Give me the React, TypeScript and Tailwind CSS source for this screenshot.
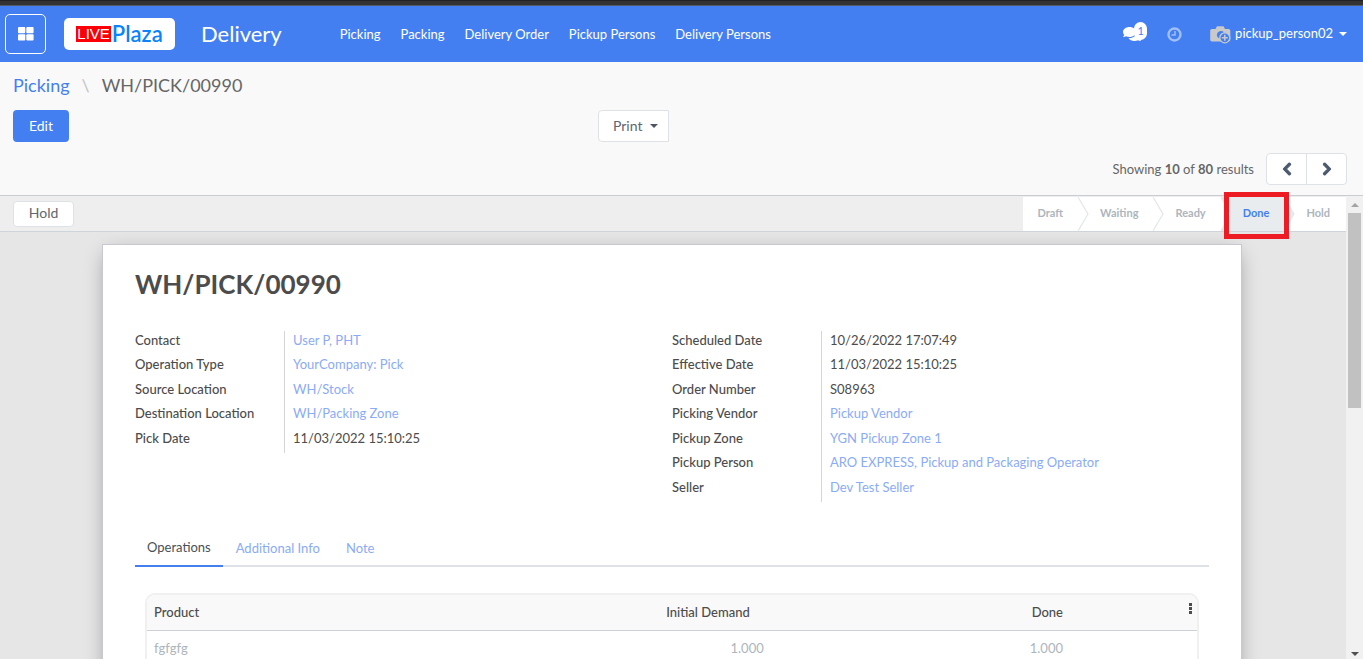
import { FaChevronLeft, FaChevronRight, FaComments } from 'react-icons/fa';

const menus = ['Picking', 'Packing', 'Delivery Order', 'Pickup Persons', 'Delivery Persons'];

const leftFields = [
  { label: 'Contact', value: 'User P, PHT', link: true },
  { label: 'Operation Type', value: 'YourCompany: Pick', link: true },
  { label: 'Source Location', value: 'WH/Stock', link: true },
  { label: 'Destination Location', value: 'WH/Packing Zone', link: true },
  { label: 'Pick Date', value: '11/03/2022 15:10:25' },
];

const rightFields = [
  { label: 'Scheduled Date', value: '10/26/2022 17:07:49' },
  { label: 'Effective Date', value: '11/03/2022 15:10:25' },
  { label: 'Order Number', value: 'S08963' },
  { label: 'Picking Vendor', value: 'Pickup Vendor', link: true },
  { label: 'Pickup Zone', value: 'YGN Pickup Zone 1', link: true },
  { label: 'Pickup Person', value: 'ARO EXPRESS, Pickup and Packaging Operator', link: true },
  { label: 'Seller', value: 'Dev Test Seller', link: true },
];

type Field = { label: string; value: string; link?: boolean };

function FieldGroup({ fields }: { fields: Field[] }) {
  return (
    <dl className="flex-1 self-start">
      {fields.map((f) => (
        <div key={f.label} className="flex odd:h-6 even:h-[25px]">
          <dt className="w-[150px] border-r border-[#d5d5d8] font-medium text-[#4c4c4c]">{f.label}</dt>
          <dd className="pl-2 text-[#4c4c4c]">
            {f.link ? <a href="#" className="text-[#8aabf8]">{f.value}</a> : f.value}
          </dd>
        </div>
      ))}
    </dl>
  );
}

function Chevron({ from, to }: { from: string; to: string }) {
  return (
    <svg className={`h-[34px] w-[11px] ${to}`} viewBox="0 0 11 34" aria-hidden="true">
      <path d="M0 0L10 17L0 34Z" className={from} />
      <path d="M0 0L10 17L0 34" fill="none" stroke="#e3e7ea" strokeWidth="1.2" />
    </svg>
  );
}

function Navbar() {
  return (
    <header className="flex h-14 shrink-0 items-center bg-[#447ff2] pl-[5px] pr-4 text-white">
      <button aria-label="Apps" className="flex h-10 w-[41px] items-center justify-center rounded-[5px] border border-white">
        <svg width="16" height="14" viewBox="0 0 16 14" fill="currentColor">
          <rect width="7.3" height="6.3" rx="1" />
          <rect x="8.3" width="7.3" height="6.3" rx="1" />
          <rect y="7.3" width="7.3" height="6.3" rx="1" />
          <rect x="8.3" y="7.3" width="7.3" height="6.3" rx="1" />
        </svg>
      </button>
      <div className="ml-[18px] flex h-8 w-[111px] items-center justify-center gap-px rounded-[5px] bg-white">
        <span className="flex h-4 items-center bg-[#fb0007] px-px font-['Liberation_Sans'] text-[15px] leading-4">LIVE</span>
        <span className="text-[22px] font-semibold leading-4 text-[#0b84fb]">Plaza</span>
      </div>
      <h1 className="ml-[26px] pb-0.5 text-[22px]">Delivery</h1>
      <nav className="ml-[58px] flex gap-5 pt-px">
        {menus.map((m) => (
          <a key={m} href="#">{m}</a>
        ))}
      </nav>
      <div className="ml-auto flex items-center">
        <button aria-label="Messages" className="relative mr-5 flex h-6 w-6 items-center">
          <FaComments className="h-4 w-[18px]" />
          <span className="absolute right-0 top-0 flex h-[18px] w-[13px] items-center justify-center rounded-full bg-white text-[11px] text-[#447ff2]">1</span>
        </button>
        <button aria-label="Activities">
          <svg width="15" height="15" viewBox="0 0 15 15" fill="none" stroke="#a1bff8">
            <circle cx="7.5" cy="7.5" r="6" strokeWidth="2.4" />
            <path d="M8 4V8H4.5" strokeWidth="1.5" />
          </svg>
        </button>
        <button className="ml-7 flex items-center">
          <svg className="mr-1" width="21" height="19" viewBox="0 0 21 19">
            <path d="M2 4H5.5L7 1.2H13.5L15 4H18.5Q20.3 4 20.3 5.8V14.7Q20.3 16.5 18.5 16.5H2Q0.2 16.5 0.2 14.7V5.8Q0.2 4 2 4Z" fill="#c9c9c9" />
            <path d="M6.8 10A4.2 4.2 0 0 1 14 7.2L11 9L9.2 13.5A4.2 4.2 0 0 1 6.8 10Z" fill="#447ff2" />
            <circle cx="14.8" cy="12.8" r="5" fill="#447ff2" stroke="#c9c9c9" strokeWidth="1.3" />
            <path d="M14.8 9.8V15.8M11.8 12.8H17.8" stroke="#c9c9c9" strokeWidth="1.5" />
          </svg>
          pickup_person02
          <span className="ml-1.5 border-x-4 border-t-4 border-x-transparent border-t-white" />
        </button>
      </div>
    </header>
  );
}

function ControlPanel() {
  return (
    <div className="shrink-0 border-b border-[#c9ccd2] bg-[#f9f9f9] px-[13px] pb-[10px] pt-[11px]">
      <nav className="flex h-6 items-center text-lg text-[#666]">
        <a href="#" className="text-[#447ff2]">Picking</a>
        <span className="mx-3 text-[#c4c4c4]">\</span>
        <span>WH/PICK/00990</span>
      </nav>
      <div className="mt-[13px] flex text-sm">
        <div className="w-7/16">
          <button className="h-8 w-14 rounded bg-[#447ff2] text-white">Edit</button>
        </div>
        <button className="flex h-8 items-center rounded-l border border-[#dee2e6] bg-white pl-[14px] pr-[10px] text-[#5f6670]">
          Print
          <span className="ml-2 border-x-4 border-t-4 border-x-transparent border-t-[#4c5563]" />
        </button>
      </div>
      <div className="mt-[11px] flex items-center justify-end pr-[3px] text-[#666]">
        <span className="pt-px">Showing <b>10</b> of <b>80</b> results</span>
        <div className="ml-3 flex h-8 w-[81px] rounded border border-[#dee2e6] bg-white text-[#4c5a70]">
          <button aria-label="Previous" className="flex flex-1 items-center justify-center border-r border-[#dee2e6]">
            <FaChevronLeft className="h-3.5 w-3.5 stroke-current stroke-[40]" />
          </button>
          <button aria-label="Next" className="flex flex-1 items-center justify-center">
            <FaChevronRight className="h-3.5 w-3.5 stroke-current stroke-[40]" />
          </button>
        </div>
      </div>
    </div>
  );
}

function StatusBar() {
  return (
    <div className="flex h-9 shrink-0 items-center justify-between border-b border-[#ced4da] bg-[#eee] pl-[13px]">
      <button className="h-[26px] w-[61px] rounded border border-[#dee2e6] bg-white pb-0.5 text-sm text-[#5f6670]">Hold</button>
      <div className="flex h-[34px] bg-white text-[11px] font-bold text-[#adb5bd]">
        <button className="pb-px pl-[15px] pr-[15px]">Draft</button>
        <Chevron from="fill-white" to="bg-white" />
        <button className="pb-px pl-[11px] pr-[15px]">Waiting</button>
        <Chevron from="fill-white" to="bg-white" />
        <button className="pb-px pl-[11px] pr-[15px]">Ready</button>
        <Chevron from="fill-white" to="bg-[#e9ecef]" />
        <div className="relative flex bg-[#e9ecef]">
          <button className="pb-px pl-[11px] pr-[15px] text-[#447ff2]">Done</button>
          <div className="pointer-events-none absolute -bottom-2 -left-2 -right-[5px] -top-[5px] border-5 border-[#ed1c24]" />
        </div>
        <Chevron from="fill-[#e9ecef]" to="bg-white" />
        <button className="pb-px pl-[11px] pr-4">Hold</button>
      </div>
    </div>
  );
}

function Sheet() {
  return (
    <div className="mx-auto h-[900px] max-w-[1140px] border border-[#c8c8d3] bg-white px-8 pt-[19px] shadow-[0_5px_20px_-5px_rgba(0,0,0,0.4)]">
      <h2 className="text-[26px] font-bold leading-10 text-[#4c4c4c]">WH/PICK/00990</h2>
      <div className="mt-[27px] flex leading-[18px]">
        <FieldGroup fields={leftFields} />
        <FieldGroup fields={rightFields} />
      </div>
      <div className="mt-[29px] flex border-b-2 border-[#dee2e6]">
        <button className="-mb-0.5 h-9 border-b-2 border-[#447ff2] px-3 text-[#495057]">Operations</button>
        <button className="px-[13px] pt-px text-[#8aabf8]">Additional Info</button>
        <button className="px-[13px] pt-px text-[#8aabf8]">Note</button>
      </div>
      <div className="mx-[10px] mt-[26px] h-[300px] overflow-hidden rounded-t-[10px] border-2 border-[#f0f0f0]">
        <table className="w-full table-fixed">
          <thead className="bg-[#f9f9f9] text-[#4c4c4c]">
            <tr className="h-[35px] border-b border-[#ced0da]">
              <th className="w-[31%] pl-[7px] text-left font-medium">Product</th>
              <th className="pr-[22px] text-right font-medium">Initial Demand</th>
              <th className="pr-2 text-right font-medium">Done</th>
              <th className="w-[12%] pr-1">
                <button aria-label="Optional columns" className="mb-1.5 ml-auto block">
                  <svg width="4" height="12" viewBox="0 0 4 12" fill="#4c4c4c">
                    <rect width="3" height="3" />
                    <rect y="4" width="3" height="3" />
                    <rect y="8" width="3" height="3" />
                  </svg>
                </button>
              </th>
            </tr>
          </thead>
          <tbody className="text-[#adb5bd]">
            <tr className="h-9">
              <td className="pl-[7px]">fgfgfg</td>
              <td className="pr-2 text-right">1.000</td>
              <td className="pr-2 text-right">1.000</td>
              <td />
            </tr>
          </tbody>
        </table>
      </div>
    </div>
  );
}

function ScrollTrack() {
  return (
    <div className="flex w-[17px] shrink-0 flex-col items-center bg-[#f1f1f1] pb-[3px] pt-[7px]">
      <span className="border-x-4 border-b-4 border-x-transparent border-b-[#a3a3a3]" />
      <span className="mt-1.5 h-[195px] w-[13px] bg-[#c1c1c1]" />
      <span className="mt-auto border-x-4 border-t-4 border-x-transparent border-t-[#505050]" />
    </div>
  );
}

export default function App() {
  return (
    <div className="flex h-screen flex-col overflow-hidden font-['Lato',sans-serif] text-[13px]">
      <div className="h-1.5 shrink-0 border-b border-[#555a66] bg-[#333]">
        <div className="h-px w-full bg-[#202124]" />
      </div>
      <Navbar />
      <ControlPanel />
      <div className="flex min-h-0 flex-1">
        <main className="flex min-w-0 flex-1 flex-col bg-[#e6e6e6]">
          <StatusBar />
          <div className="min-h-0 flex-1 overflow-hidden pr-0.5 pt-3">
            <Sheet />
          </div>
        </main>
        <ScrollTrack />
      </div>
    </div>
  );
}
